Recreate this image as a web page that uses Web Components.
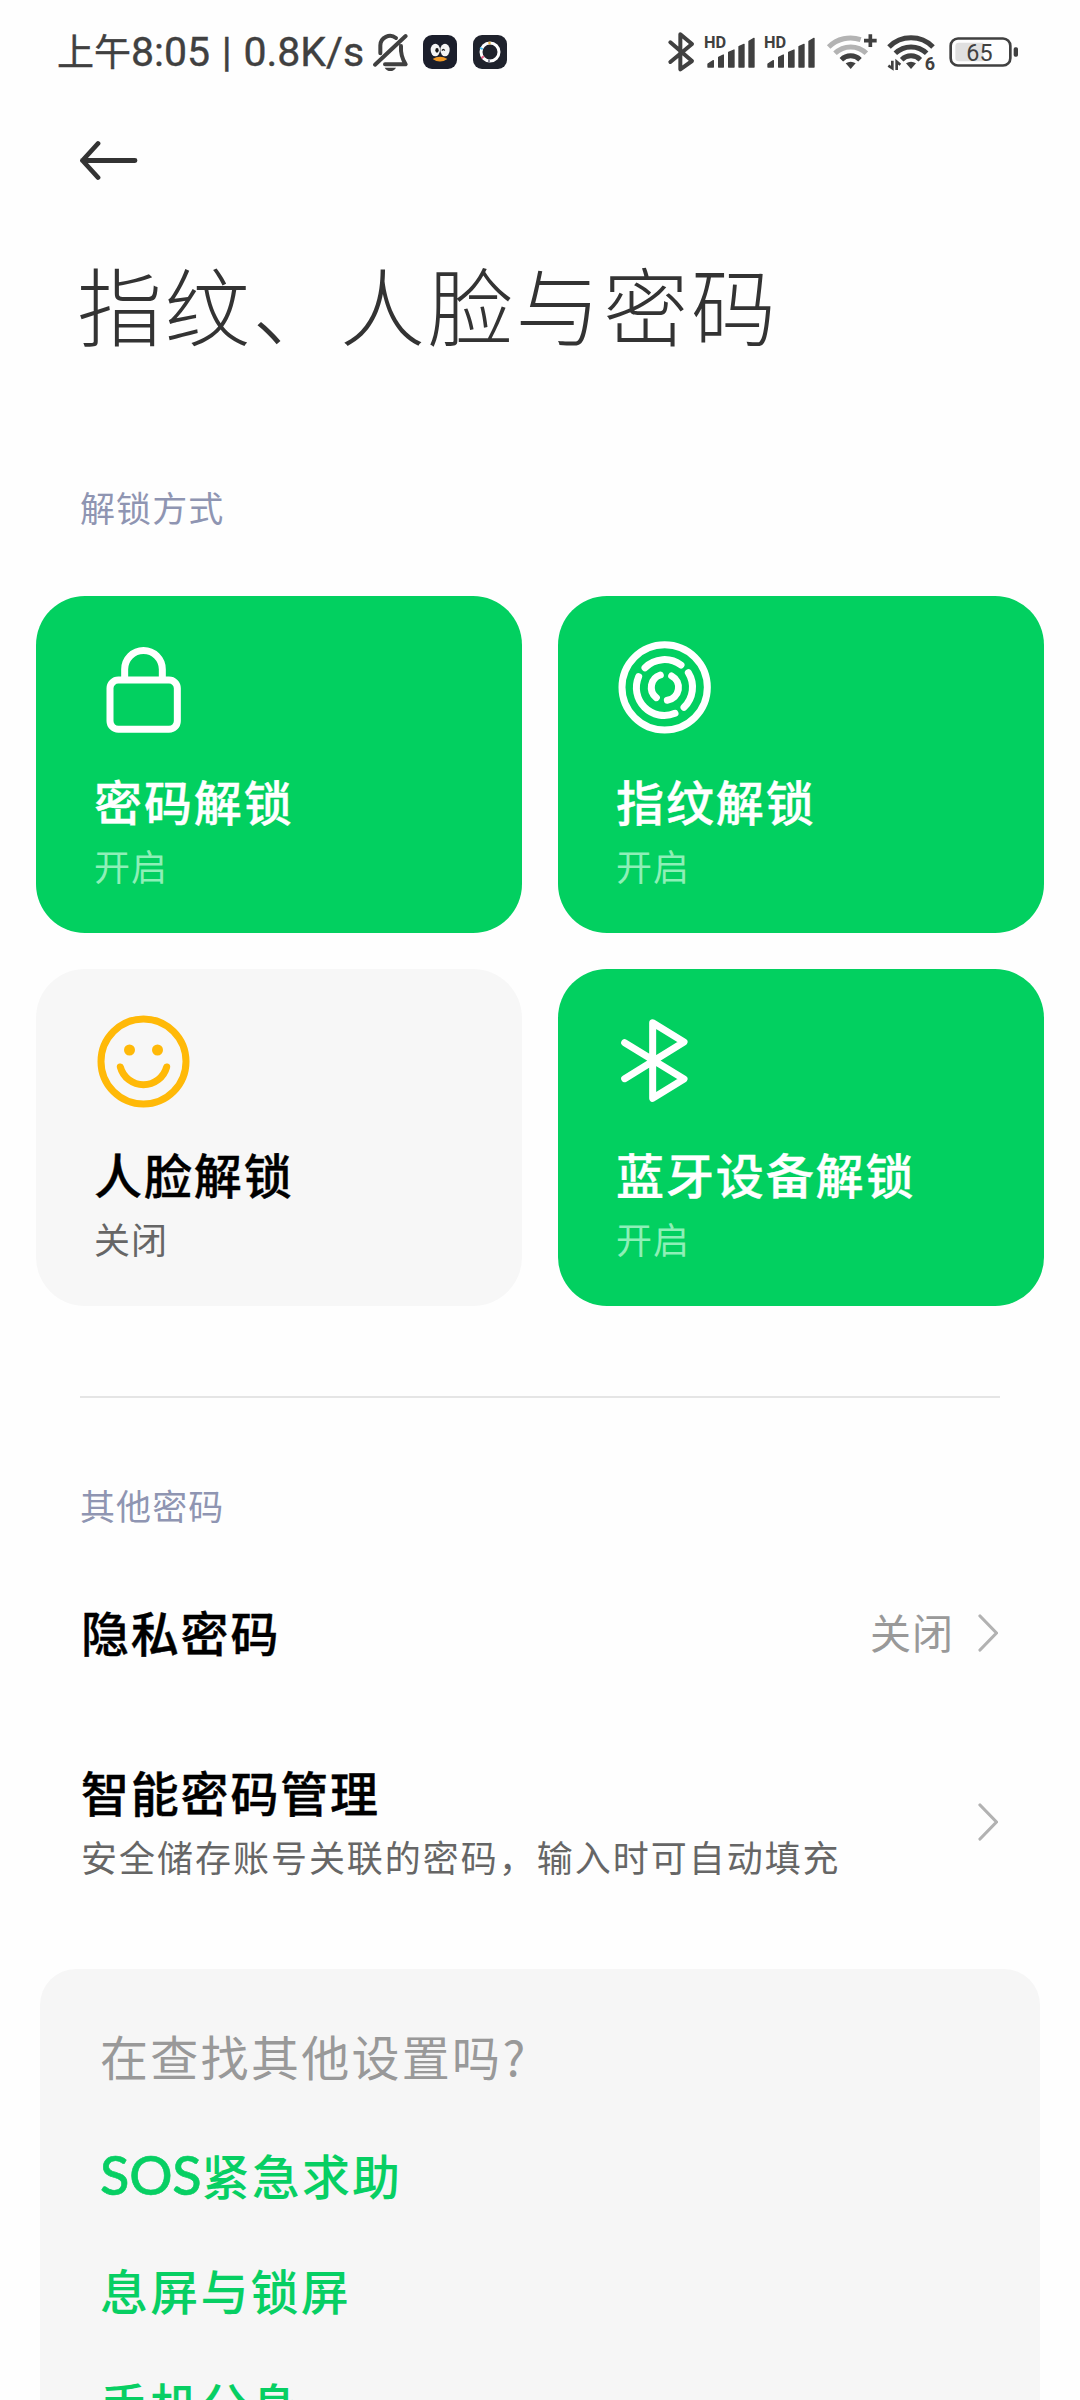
<!DOCTYPE html>
<html lang="zh-CN">
<head>
<meta charset="utf-8">
<title>指纹、人脸与密码</title>
<style>
html,body{margin:0;padding:0}
body{width:1080px;height:2400px;overflow:hidden;background:#fefefe;font-family:"Noto Sans CJK SC",sans-serif}
</style>
</head>
<body>
<settings-page></settings-page>
<script>
const define = (name, html) => customElements.define(name, class extends HTMLElement {
  constructor() {
    super();
    this.attachShadow({ mode: 'open' }).innerHTML = html;
  }
});

define('status-bar', `
<style>
:host{display:flex;height:102px;box-sizing:border-box;padding:20px 0 0 57px;color:#404040}
.clock{width:313px;height:62px;white-space:pre;font:400 41px/60px Roboto,"Noto Sans CJK SC",sans-serif;letter-spacing:0;word-spacing:1.500px;-webkit-text-stroke:.4px currentColor}
.clock span{font:400 37px/60px "Noto Sans CJK SC",sans-serif;letter-spacing:0}
svg{display:block;height:70px;flex:none}
.sys{margin-left:130px}
text{fill:#404040;font-family:Roboto,sans-serif}
</style>
<div class="clock"><span>上午</span>8:05 | 0.8K/s</div>
<svg width="150" viewBox="990 0 450 210" fill="none">
  <g stroke="#404040" stroke-width="12" stroke-linecap="round" stroke-linejoin="round">
    <path d="M1005 134L1097 48M1021 100V76A29 29 0 0 1 1068 54M1083 78Q1081 108 1097 133H1035"/>
  </g>
  <path d="M1034 143h34q-6 10-17 10t-17-10z" fill="#404040"/>
  <rect x="1149" y="45" width="102" height="102" rx="27" fill="#1b1e2b"/>
  <ellipse cx="1186" cy="90" rx="14" ry="19" fill="#f5f5f5"/><ellipse cx="1215" cy="90" rx="14" ry="19" fill="#f5f5f5"/>
  <ellipse cx="1191" cy="91" rx="5" ry="7" fill="#161616"/><path d="M1206 92q4-8 8 0" stroke="#222" stroke-width="4"/>
  <path d="M1178 117q22-13 44 0q-22 15-44 0z" fill="#f39a25"/>
  <rect x="1299" y="45" width="102" height="102" rx="27" fill="#1f222c"/>
  <circle cx="1350" cy="96" r="27" stroke="#fff" stroke-width="9"/>
  <path d="M1323 88l2-5" stroke="#45bdf0" stroke-width="9"/><path d="M1326 109l4 5" stroke="#e75d88" stroke-width="9"/><path d="M1345 69h7" stroke="#e9b84a" stroke-width="7"/><path d="M1344 122h6" stroke="#889" stroke-width="9"/>
</svg>
<svg class="sys" width="400" viewBox="0 0 1200 210" fill="none">
  <path d="M61 67L126 123L91 148V43L126 72L61 126" stroke="#404040" stroke-width="12" stroke-linecap="round" stroke-linejoin="round"/>
  <g>
    <text x="162" y="84" font-size="49" font-weight="700">HD</text>
    <path fill="#404040" stroke="#404040" stroke-width="4" stroke-linejoin="round" d="M174 141v-9l16-10v19zM206 141v-29l14-7v36zM236 141v-44l16-7v51zM267 141v-61l15-7v68zM297 141v-77l15-9v86z"/>
  </g>
  <g transform="translate(180 0)">
    <text x="162" y="84" font-size="49" font-weight="700">HD</text>
    <path fill="#404040" stroke="#404040" stroke-width="4" stroke-linejoin="round" d="M174 141v-9l16-10v19zM206 141v-29l14-7v36zM236 141v-44l16-7v51zM267 141v-61l15-7v68zM297 141v-77l15-9v86z"/>
  </g>
  <g stroke-width="15">
    <path d="M536 81A93 93 0 0 1 632 59M555 100A67 67 0 0 1 649 100" stroke="#b3b3b3"/>
    <path d="M574 119A40 40 0 0 1 630 119" stroke="#404040"/>
    <path d="M661 43v38M642 62h38" stroke="#404040" stroke-width="11"/>
    <path d="M587 130q15-10 30 0l-15 17z" fill="#404040"/>
    <path d="M717 81A93 93 0 0 1 849 81M736 100A67 67 0 0 1 830 100M755 119A40 40 0 0 1 811 119" stroke="#404040"/>
    <path d="M768 130q15-10 30 0l-15 17z" fill="#404040"/>
    <path d="M715 137l12 8V122M740 150V125l11 9" stroke="#404040" stroke-width="8"/>
  </g>
  <text x="824" y="150" font-size="54" font-weight="700">6</text>
  <rect x="902" y="55.500" width="179" height="81" rx="22" stroke="#404040" stroke-width="8"/>
  <path d="M926 68h74v56h-74q-10 0-10-10V78q0-10 10-10z" fill="#e0e0e0"/>
  <text x="949" y="122" font-size="70">65</text>
  <rect x="1091" y="82" width="13" height="28" rx="5" fill="#404040"/>
</svg>`);

define('page-header', `
<style>
:host{display:block;padding:0 80px}
svg{display:block;margin-top:38px}
h1{margin:76px 0 0;font-size:85px;line-height:90px;height:90px;font-weight:300;letter-spacing:2.700px;color:#333;white-space:nowrap;transform:translateX(-3px)}
</style>
<svg width="60" height="42" viewBox="0 0 60 42" fill="none" stroke="#333" stroke-width="4.800" stroke-linecap="round" stroke-linejoin="round"><path d="M18 3.500L2.500 20.500L18 37.500M2.500 20.500H55"/></svg>
<h1><slot></slot></h1>`);

define('section-label', `
<style>:host{display:block;padding-left:80px;height:54px;font-size:35px;line-height:54px;letter-spacing:1.100px;color:#8f95b2}</style>
<slot></slot>`);

define('tile-grid', `
<style>:host{display:grid;grid-template-columns:486px 486px;gap:36px;padding:0 36px}</style>
<slot></slot>`);

define('unlock-tile', `
<style>
:host{display:block;height:337px;box-sizing:border-box;padding:38px 58px 0;border-radius:49px;background:#f7f7f7;color:#000;--sub:#666}
:host([on]){background:#02d060;color:#fff;--sub:#8eefb7}
.icon{height:100px}
.t{margin-top:33px;height:66px;line-height:66px;font-size:48px;font-weight:500;letter-spacing:1.900px;white-space:nowrap;-webkit-text-stroke:.4px currentColor}
.s{margin-top:8px;height:48px;line-height:48px;font-size:36px;letter-spacing:1px;color:var(--sub)}
::slotted(svg){display:block;width:100px;height:100px;overflow:visible}
</style>
<div class="icon"><slot name="icon"></slot></div>
<div class="t"><slot></slot></div>
<div class="s"><slot name="state"></slot></div>`);

define('setting-row', `
<style>
:host{display:flex;align-items:center;padding:0 80px 0 81px}
.main{flex:1}
.t{height:66px;line-height:66px;font-size:48px;font-weight:500;letter-spacing:1.800px;color:#000;-webkit-text-stroke:.4px currentColor}
.s{line-height:52px;font-size:36px;letter-spacing:1.980px;color:#666}
::slotted([slot=desc]){display:block;padding-top:6px}
.v{font-size:41px;line-height:60px;letter-spacing:1px;color:#999;margin-right:24px}
svg{display:block;flex:none;margin:4px 2px 0 0}
</style>
<div class="main"><div class="t"><slot></slot></div><div class="s"><slot name="desc"></slot></div></div>
<div class="v"><slot name="value"></slot></div>
<svg width="20" height="38" viewBox="0 0 20 38" fill="none" stroke="#b2b2b2" stroke-width="3.200" stroke-linecap="round" stroke-linejoin="round"><path d="M2 2L18.500 19L2 36"/></svg>`);

define('related-card', `
<style>
:host{display:block;margin:0 40px;height:520px;box-sizing:border-box;padding:50px 60px 0;border-radius:36px;background:#f6f6f6}
.q{height:72px;line-height:72px;font-size:48px;letter-spacing:2.300px;color:#999}
.list{padding-top:26px}
::slotted(a){display:block;height:114.500px;line-height:114.500px;font-size:48px;font-weight:500;letter-spacing:2.200px;color:#07cf63}
</style>
<div class="q"><slot name="title"></slot></div>
<div class="list"><slot></slot></div>`);

define('settings-page', `
<style>
:host{display:block;width:1080px;height:2400px;overflow:hidden}
.l1{margin-top:132px}
.grid{margin-top:62px}
hr{border:0;height:2px;margin:90px 80px 0;background:#e5e5e5}
.l2{margin-top:80px}
.r1{margin-top:66px}
.r2{margin-top:94px}
.card{margin-top:87px}
.latin{font:500 54px/1 Lato,sans-serif;letter-spacing:-.2px;-webkit-text-stroke:.6px currentColor}
</style>
<status-bar></status-bar>
<page-header>指纹、人脸与密码</page-header>
<section-label class="l1">解锁方式</section-label>
<tile-grid class="grid">
  <unlock-tile on>
    <svg slot="icon" viewBox="222 162 300 300" fill="none" stroke="#fff" stroke-width="21"><path d="M314 296V268a56.500 56.500 0 0 1 113 0V296"/><rect x="270" y="300" width="202" height="148" rx="25"/></svg>
    密码解锁<span slot="state">开启</span>
  </unlock-tile>
  <unlock-tile on>
    <svg slot="icon" viewBox="228 162 300 300" fill="none" stroke="#fff" stroke-width="21" stroke-linecap="round"><circle cx="374" cy="322" r="128"/><path d="M315 263A83.500 83.500 0 0 1 423 255M445 278A83.500 83.500 0 0 1 432 382M296 290A83.500 83.500 0 0 0 405 400M361 285A39 39 0 0 0 349 353M395 288A39 39 0 0 1 382 361"/></svg>
    指纹解锁<span slot="state">开启</span>
  </unlock-tile>
  <unlock-tile>
    <svg slot="icon" viewBox="222 171 300 300" fill="none" stroke="#ffb908" stroke-width="21" stroke-linecap="round"><circle cx="370.500" cy="334.500" r="127.500"/><path d="M301 351A72 72 0 0 0 440 351"/><g fill="#ffb908" stroke="none"><circle cx="328.500" cy="300" r="16.500"/><circle cx="412.500" cy="300" r="16.500"/></g></svg>
    人脸解锁<span slot="state">关闭</span>
  </unlock-tile>
  <unlock-tile on>
    <svg slot="icon" viewBox="228 171 300 300" fill="none" stroke="#fff" stroke-width="21" stroke-linecap="round" stroke-linejoin="round"><path d="M254 278L432 387L338 445V218L432 276L254 386"/></svg>
    蓝牙设备解锁<span slot="state">开启</span>
  </unlock-tile>
</tile-grid>
<hr>
<section-label class="l2">其他密码</section-label>
<setting-row class="r1">隐私密码<span slot="value">关闭</span></setting-row>
<setting-row class="r2">智能密码管理<span slot="desc">安全储存账号关联的密码，输入时可自动填充</span></setting-row>
<related-card class="card">
  <span slot="title">在查找其他设置吗?</span>
  <a><span class="latin">SOS</span>紧急求助</a><a>息屏与锁屏</a><a>手机分身</a>
</related-card>`);
</script>
</body>
</html>
